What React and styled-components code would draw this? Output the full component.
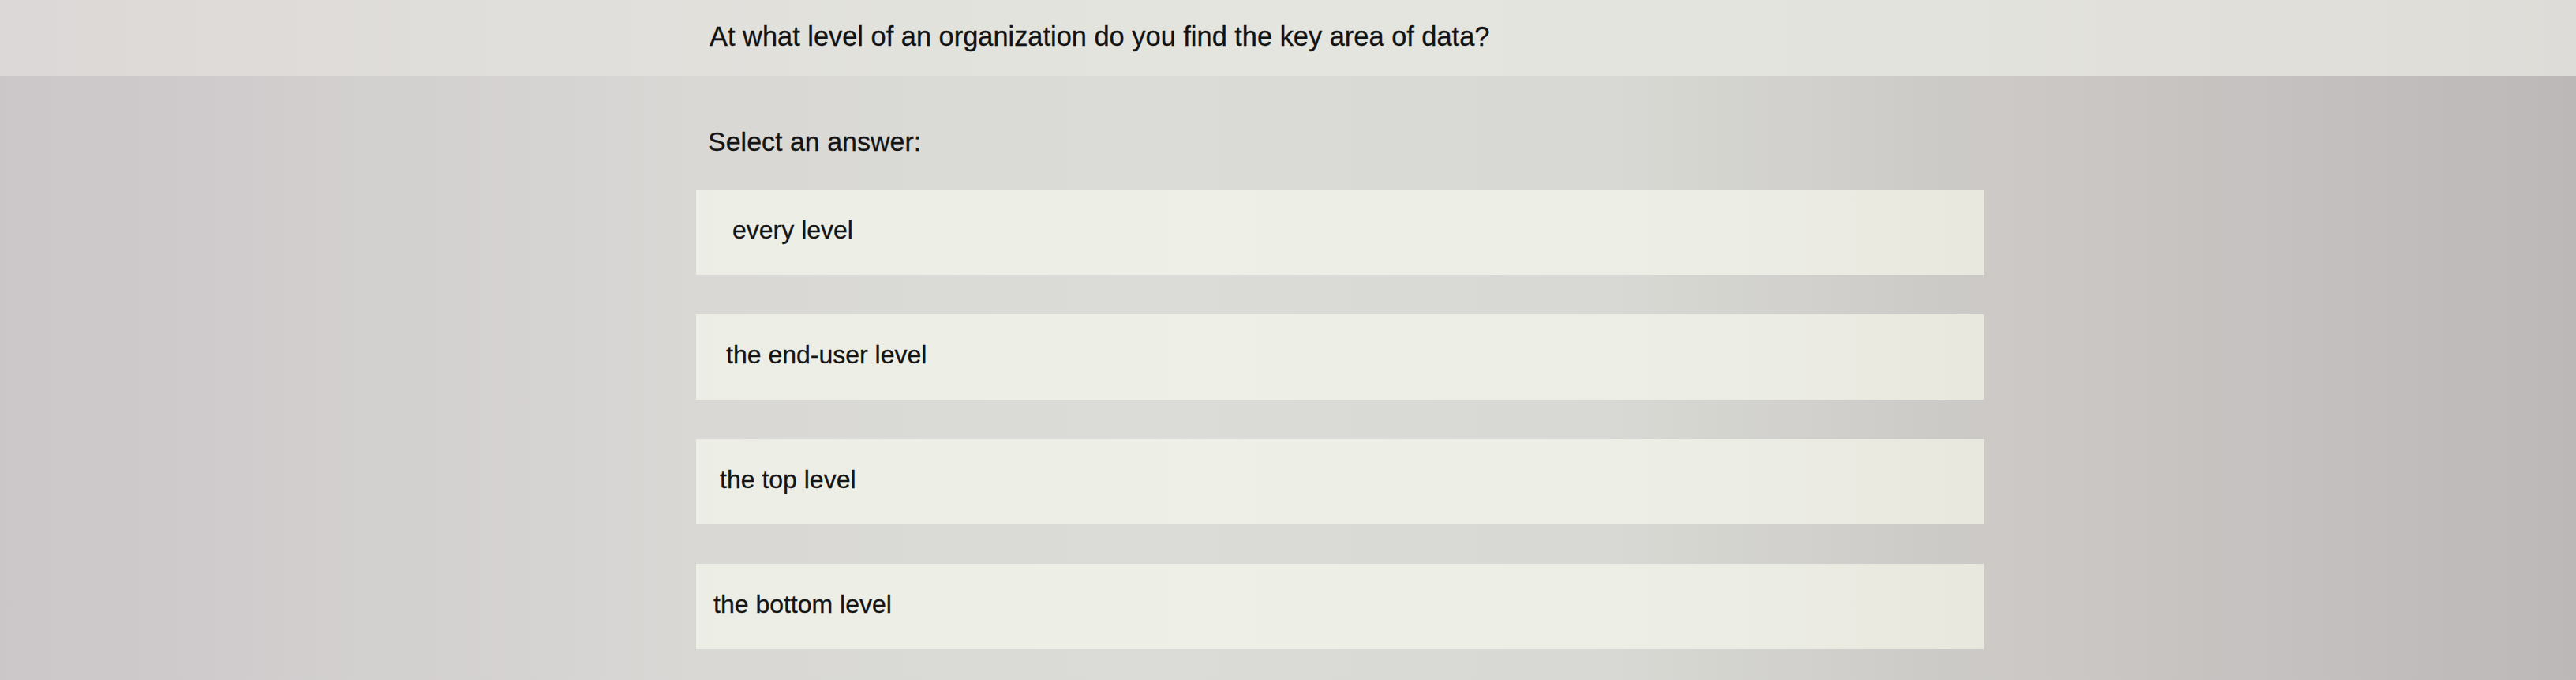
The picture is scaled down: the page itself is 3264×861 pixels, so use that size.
import React from "react";
import styled, { createGlobalStyle } from "styled-components";

const Global = createGlobalStyle`
  html, body { margin: 0; padding: 0; }
  body {
    width: 3264px;
    height: 861px;
    overflow: hidden;
    font-family: "Liberation Sans", Arial, Helvetica, sans-serif;
    color: #151515;
  }
`;

const Page = styled.div`
  width: 3264px;
  height: 861px;
  display: flex;
  flex-direction: column;
  background: linear-gradient(
    90deg,
    #cbc6c8 0%,
    #d3d0d0 15%,
    #d9d8d5 28%,
    #dbdcd7 45%,
    #d8d9d4 62%,
    #cdcbc8 75%,
    #c5c1c0 88%,
    #bcb8b8 100%
  );
`;

const Header = styled.header`
  height: 96px;
  box-sizing: border-box;
  padding-top: 26px;
  background: linear-gradient(
    90deg,
    #dcd8d7 0%,
    #e1e0dc 25%,
    #e4e5df 50%,
    #e3e3dd 75%,
    #dedcd8 100%
  );
`;

const Column = styled.div`
  margin-left: ${(p) => p.$left}px;
  width: ${(p) => p.$width}px;
`;

const Question = styled.h1`
  margin: 0;
  font-size: 34.4px;
  line-height: 40px;
  font-weight: 400;
  color: #121212;
  -webkit-text-stroke: 0.3px #121212;
`;

const Main = styled.main`
  padding-top: 63px;
`;

const Label = styled.div`
  font-size: 34px;
  line-height: 40px;
  padding-left: 15px;
  color: #141414;
  -webkit-text-stroke: 0.3px #141414;
`;

const Options = styled.div`
  margin-top: 41px;
  display: flex;
  flex-direction: column;
  gap: 50px;
`;

const Option = styled.button`
  all: unset;
  box-sizing: border-box;
  height: 108px;
  width: 100%;
  display: flex;
  align-items: center;
  padding: 0 0 6px ${(p) => p.$pad}px;
  font-family: "Liberation Sans", Arial, Helvetica, sans-serif;
  font-size: 32px;
  color: #141414;
  -webkit-text-stroke: 0.3px #141414;
  background: linear-gradient(90deg, #eceee6 0%, #eef0e8 40%, #eceee5 75%, #e9e8df 100%);
  cursor: pointer;
`;

const answers = [
  { text: "every level", pad: 46 },
  { text: "the end-user level", pad: 38 },
  { text: "the top level", pad: 30 },
  { text: "the bottom level", pad: 22 },
];

export default function App() {
  return (
    <>
      <Global />
      <Page>
        <Header>
          <Column $left={899} $width={1600}>
            <Question>At what level of an organization do you find the key area of data?</Question>
          </Column>
        </Header>
        <Main>
          <Column $left={882} $width={1632}>
            <Label>Select an answer:</Label>
            <Options>
              {answers.map((a) => (
                <Option key={a.text} $pad={a.pad}>
                  {a.text}
                </Option>
              ))}
            </Options>
          </Column>
        </Main>
      </Page>
    </>
  );
}
